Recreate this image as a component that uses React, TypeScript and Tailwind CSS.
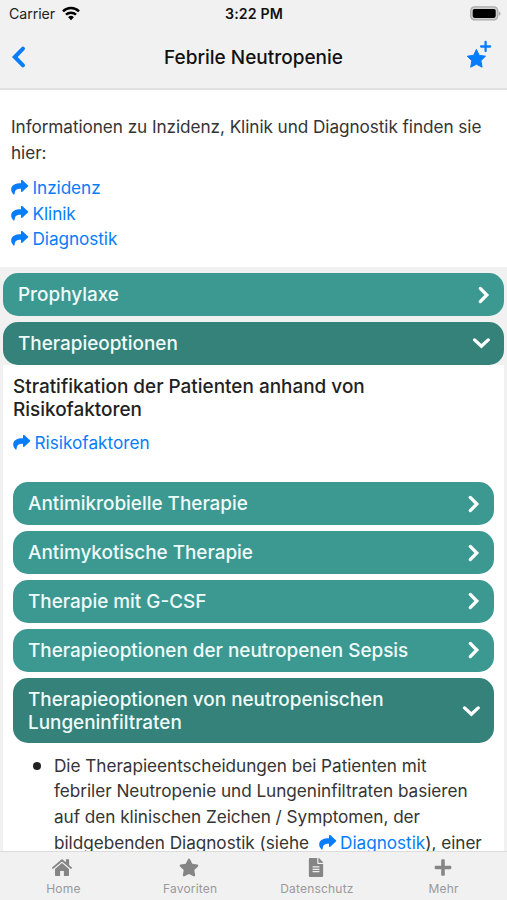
import React from "react";
import { FaStar, FaFileAlt, FaPlus } from "react-icons/fa";

type AccordionBarProps = {
  title: React.ReactNode;
  open?: boolean;
  tall?: boolean;
};

const Chevron: React.FC<{ open?: boolean }> = ({ open }) => (
  <svg
    className="h-[18px] w-[18px] shrink-0"
    viewBox="0 0 18 18"
    fill="none"
    stroke="currentColor"
    strokeWidth="3.3"
    strokeLinecap="round"
    strokeLinejoin="miter"
  >
    {open ? <path d="M2.6 5.9 9.4 12.3 16.2 5.9" /> : <path d="M8.3 2.4 14.8 9 8.3 15.6" />}
  </svg>
);

const AccordionBar: React.FC<AccordionBarProps> = ({ title, open, tall }) => (
  <div
    className={`flex items-center justify-between rounded-[15px] pr-[14px] pl-[15px] text-[18.9px] leading-[23px] font-medium text-[#f0fbfa] ${
      open ? "bg-[#34827a]" : "bg-[#3c9992]"
    } ${tall ? "h-[65.5px]" : "h-[42.7px]"}`}
  >
    <span>{title}</span>
    <span className="flex text-white">
      <Chevron open={open} />
    </span>
  </div>
);

const ShareLink: React.FC<{ label: string }> = ({ label }) => (
  <a className="text-[#087dfb]">
    <svg className="mr-[3.5px] inline-block h-[15px] w-[18px] align-[-1px]" viewBox="0 0 18 15" fill="currentColor">
      <path d="M10 .7c0-.7.8-1 1.3-.6l5.6 5.2c.5.4.5.9 0 1.3l-5.6 5.2c-.5.4-1.3.1-1.3-.6V8.7C6.4 8.6 4 9.2 3.6 13.9c-.1.7-.9.9-1.3.3C.8 12.6.1 11 .2 9.2.4 4.9 4.2 3.3 10 3.2Z" />
    </svg>
    {label}
  </a>
);

const HomeIcon: React.FC<{ className?: string }> = ({ className }) => (
  <svg className={className} viewBox="0 0 20 19" fill="currentColor">
    <path d="M1 9.9 10 2.2l9 7.7" fill="none" stroke="currentColor" strokeWidth="1.9" strokeLinecap="round" />
    <path d="M13.9 1.3h3.2v7l-3.2-2.7Z" />
    <path d="m10 4.9 7 6v6.1c0 .6-.4 1-1 1h-4.1v-5H8.1v5H4c-.6 0-1-.4-1-1v-6.1Z" />
  </svg>
);

const tabs = [
  { label: "Home", icon: HomeIcon },
  { label: "Favoriten", icon: FaStar },
  { label: "Datenschutz", icon: FaFileAlt },
  { label: "Mehr", icon: FaPlus },
];

const App: React.FC = () => {
  return (
    <div className="flex h-[900px] w-[507px] flex-col overflow-hidden bg-[#f1f1f1] font-['Inter','Liberation_Sans',sans-serif] text-[17.2px] leading-[25.7px] tracking-[-0.07px] text-[#353535]">
      {/* status bar */}
      <div className="grid h-[28px] shrink-0 grid-cols-3 items-center pr-[6px] pl-[9px] text-[14.2px] leading-none text-[#222]">
        <div className="flex items-center gap-[7px]">
          <span>Carrier</span>
          <svg className="-mt-px h-[15px] w-[18px] text-black" viewBox="0 0 18 15" fill="none" stroke="currentColor" strokeWidth="2.5">
            <path d="M1 5.4a11.4 11.4 0 0 1 16 0" />
            <path d="M4 8.7a7.2 7.2 0 0 1 10 0" />
            <path d="M9 14.2 6.1 11.2a4.2 4.2 0 0 1 5.8 0Z" fill="currentColor" stroke="none" />
          </svg>
        </div>
        <span className="pr-[2px] text-center font-semibold tracking-[0.12px] text-[#111]">3:22 PM</span>
        <svg className="-mt-[2px] h-[15px] w-[31px] justify-self-end" viewBox="0 0 31 15">
          <rect x="0.7" y="0.9" width="27" height="13" rx="3.8" fill="#d0d0d0" stroke="#a9a9a9" strokeWidth="1.2" />
          <rect x="2.7" y="2.9" width="23" height="9" rx="1.8" fill="#000" />
          <path d="M28.8 5.2c2.2.8 2.2 3.8 0 4.6Z" fill="#a9a9a9" />
        </svg>
      </div>

      {/* nav bar */}
      <div className="grid h-[62px] shrink-0 grid-cols-[60px_1fr_60px] items-center border-b-2 border-[#e0e0e0] pb-[1px]">
        <svg className="-mt-[2px] ml-[10px] h-[24px] w-[18px]" viewBox="0 0 18 24" fill="none" stroke="#087dfb" strokeWidth="4" strokeLinecap="round">
          <path d="M13 3.7 4.8 12l8.2 8.3" />
        </svg>
        <h1 className="text-center text-[19px] font-medium tracking-normal text-[#111]">Febrile Neutropenie</h1>
        <svg className="-mt-[5px] mr-[15px] h-[30px] w-[26px] justify-self-end" viewBox="0 0 26 30" fill="#087dfb">
          <path d="M10.4 9.4 13.2 15.3 19.5 16.2 14.9 20.7 16.1 27.2 10.4 24.2 4.7 27.2 5.8 20.7 1.2 16.2 7.6 15.3Z" stroke="#087dfb" strokeWidth="1" strokeLinejoin="round" />
          <path d="M19.6 2v9M15.1 6.5h9" stroke="#087dfb" strokeWidth="2.3" strokeLinecap="round" />
        </svg>
      </div>

      {/* page content */}
      <div className="min-h-0 flex-1 overflow-hidden">
        <div className="h-[177px] bg-white px-[11px] pt-[24px]">
          <p className="whitespace-nowrap">
            Informationen zu Inzidenz, Klinik und Diagnostik finden sie
            <br />
            hier:
          </p>
          <div className="mt-[9.5px] flex flex-col items-start">
            <ShareLink label="Inzidenz" />
            <ShareLink label="Klinik" />
            <ShareLink label="Diagnostik" />
          </div>
        </div>

        <div className="flex flex-col gap-[6px] px-[3px] pt-[6.4px] tracking-normal">
          <AccordionBar title="Prophylaxe" />
          <div className="bg-white">
            <div className="bg-[#f1f1f1]">
              <AccordionBar title="Therapieoptionen" open />
            </div>
            <div className="px-[10px] pt-[10px]">
              <h2 className="text-[18.95px] leading-[23.3px] font-medium text-[#222]">
                Stratifikation der Patienten anhand von
                <br />
                Risikofaktoren
              </h2>
              <div className="mt-[9px] flex">
                <ShareLink label="Risikofaktoren" />
              </div>
              <div className="mt-[26.3px] flex flex-col gap-[6.2px]">
                <AccordionBar title="Antimikrobielle Therapie" />
                <AccordionBar title="Antimykotische Therapie" />
                <AccordionBar title="Therapie mit G-CSF" />
                <AccordionBar title="Therapieoptionen der neutropenen Sepsis" />
                <AccordionBar
                  open
                  tall
                  title={
                    <>
                      Therapieoptionen von neutropenischen
                      <br />
                      Lungeninfiltraten
                    </>
                  }
                />
              </div>
              <div className="mt-[9.4px] flex gap-[13px] pl-[20px]">
                <span className="mt-[9px] h-[8px] w-[8px] shrink-0 rounded-full bg-[#222]" />
                <p className="tracking-[-0.04px] whitespace-nowrap">
                  Die Therapieentscheidungen bei Patienten mit
                  <br />
                  febriler Neutropenie und Lungeninfiltraten basieren
                  <br />
                  auf den klinischen Zeichen / Symptomen, der
                  <br />
                  bildgebenden Diagnostik (siehe&nbsp; <ShareLink label="Diagnostik" />), einer
                </p>
              </div>
            </div>
          </div>
        </div>
      </div>

      {/* tab bar */}
      <div className="grid h-[49px] shrink-0 grid-cols-4 border-t border-[#dcdcdc] bg-[#f1f1f1] text-[#858585]">
        {tabs.map(({ label, icon: Icon }) => (
          <div key={label} className="flex flex-col items-center pt-[6px]">
            <Icon className="-ml-[2px] h-[19px] w-[20px]" />
            <span className="mt-[4px] text-[12px] leading-[15px] tracking-[0.2px] text-[#999]">{label}</span>
          </div>
        ))}
      </div>
    </div>
  );
};

export default App;
